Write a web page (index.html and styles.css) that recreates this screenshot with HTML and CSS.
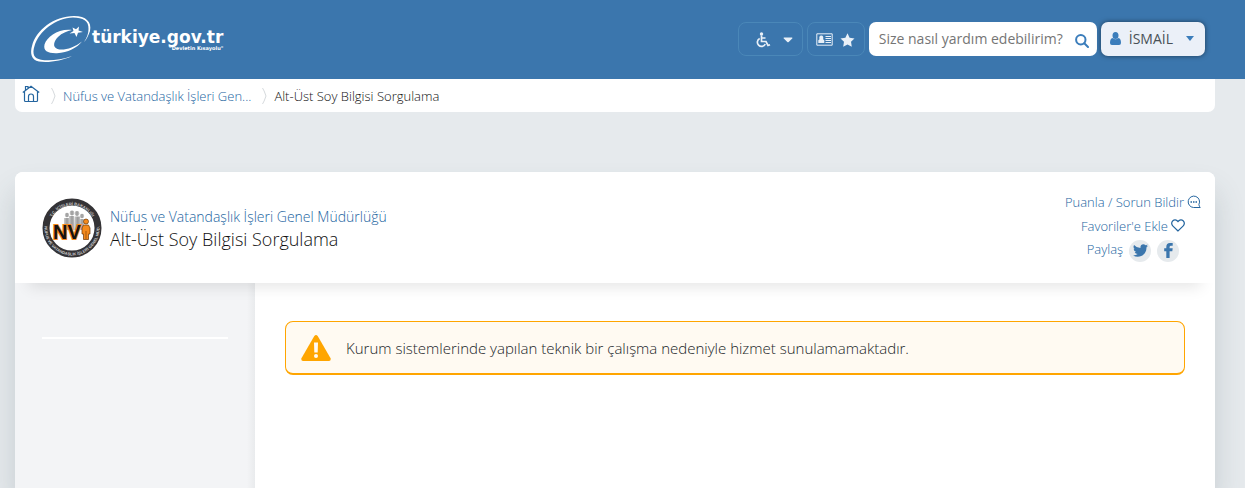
FILE: index.html
```html
<!DOCTYPE html>
<html lang="tr">
<head>
<meta charset="utf-8">
<meta name="viewport" content="width=device-width, initial-scale=1">
<title>Alt-Üst Soy Bilgisi Sorgulama</title>
<link rel="stylesheet" href="styles.css">
</head>
<body>
<header class="topbar">
  <a class="brand" href="#">
    <svg class="brand-mark" viewBox="0 0 62 48" aria-hidden="true">
      <path fill="#fff" d="M42 41C32 46 18 48 9 46.500C1 45 0 38 2 31C6 15 24 1 44 1C56 1 62 7 60 16C58 21 57 24 54 27C57 23 58.500 18 58.500 14C59 6 53 2.500 43 2.500C26 3 9 16 4.500 31C2 39 4 43.500 11 44.700C19 46 31 45 42 41Z"/>
      <path fill="#fff" d="M42 15C28 13.500 17 22 14.500 29.500C13 36 18 38.500 27 38.200C38 37.500 47 33 52 26.500C44 33 33 36 27.500 34C22 32 24 26 28 22C32 18 37 16 42 15Z"/>
      <path fill="#fff" d="M49 11.500L48.500 15.500L53 17L48 17.700L46.500 22L44.500 18L39.500 18.500L43.500 16L42.500 12.500L46 14.200Z"/>
    </svg>
    <span class="brand-text"><span class="brand-name">türkiye.gov.tr</span><span class="brand-motto">"Devletin Kısayolu"</span></span>
  </a>
  <nav class="tools">
    <button class="tool tool-access" type="button" aria-label="Erişilebilirlik">
      <svg width="16" height="16" viewBox="0 0 16 16" fill="none" stroke="currentColor" stroke-width="1.700"><circle cx="6.500" cy="2" r="1.700" fill="currentColor" stroke="none"/><path d="M6.500 3.500V9.500H11L13 13.500L15 12.700M6.500 6H10.500M4.700 6.500A4.200 4.200 0 1 0 10.300 12.200"/></svg>
      <svg width="10" height="6" viewBox="0 0 10 6"><path fill="currentColor" d="M1 .5H9Q10 .8 9.200 1.500L5.700 5Q5 5.500 4.300 5L.8 1.500Q0 .8 1 .5Z"/></svg>
    </button>
    <button class="tool tool-cards" type="button" aria-label="Kısayollar">
      <svg width="17" height="13" viewBox="0 0 17 13"><path fill="none" stroke="currentColor" d="M.8 .8H16.200V12.200H.8Z"/><path fill="currentColor" d="M2.300 10V7.200L3.500 6.200C3 4.500 3.300 2.500 5.300 2.500S7.600 4.500 7.100 6.200L8.300 7.200V10ZM9.500 3H15V4H9.500ZM9.500 5H15V6H9.500ZM9.500 7H15V8H9.500ZM9.500 9H15V10H9.500Z"/></svg>
      <svg width="15" height="14" viewBox="0 0 15 14"><path fill="currentColor" d="M7.500 .3L9.600 4.700L14.500 5.400L11 8.800L11.800 13.700L7.500 11.400L3.200 13.700L4 8.800L.5 5.400L5.400 4.700Z"/></svg>
    </button>
    <form class="search">
      <input type="text" aria-label="Arama" placeholder="Size nasıl yardım edebilirim?">
      <button type="button" aria-label="Ara"><svg width="14" height="14" viewBox="0 0 14 14" fill="none" stroke="currentColor" stroke-width="2"><circle cx="5.800" cy="5.800" r="4.700"/><path d="M9.300 9.300L13 13" stroke-linecap="round"/></svg></button>
    </form>
    <button class="user" type="button">
      <svg width="11" height="13" viewBox="0 0 11 13"><path fill="currentColor" d="M2.500 3.500A3 3.500 0 0 1 8.500 3.500A3 3.500 0 0 1 2.500 3.500M2.500 6Q5.500 8.500 8.500 6Q11 6.500 11 11Q11 13 9 13H2Q0 13 0 11Q0 6.500 2.500 6Z"/></svg>
      <span class="user-name">İSMAİL</span>
      <svg width="8" height="5" viewBox="0 0 8 5"><path fill="currentColor" d="M0 0H8L4 5Z"/></svg>
    </button>
  </nav>
</header>
<nav class="crumbs" aria-label="Sayfa yolu">
  <a class="home" href="#" aria-label="Ana sayfa"><svg width="18" height="18" viewBox="0 0 18 18" fill="none" stroke="currentColor" stroke-width="1.200"><path d="M.8 7.500L9 1.200L17.200 7.500M2.500 6.500V15.500Q2.500 16.500 3.500 16.500H14.500Q15.500 16.500 15.500 15.500V6.500M6.500 16V11.500Q6.500 9 9 9T11.500 11.500V16M3.500 5V1.500H6V3"/></svg></a>
  <svg class="sep" width="5" height="18" viewBox="0 0 5 18"><path fill="none" stroke="#d6dadd" d="M.5 1Q2 3 4 9Q2 15 .5 17"/></svg>
  <a class="crumb-link" href="#">Nüfus ve Vatandaşlık İşleri Gen...</a>
  <svg class="sep" width="5" height="18" viewBox="0 0 5 18"><path fill="none" stroke="#d6dadd" d="M.5 1Q2 3 4 9Q2 15 .5 17"/></svg>
  <span>Alt-Üst Soy Bilgisi Sorgulama</span>
</nav>
<main class="card">
  <div class="card-head">
    <svg class="seal" viewBox="0 0 60 60" role="img" aria-label="NVİ">
      <defs>
        <path id="arc-top" d="M10 41A22.800 22.800 0 1 1 50 41"/>
        <path id="arc-low" d="M4 21A27.500 27.500 0 1 0 56 21"/>
        <linearGradient id="people" x1="0" y1="0" x2="1" y2="0"><stop offset="0" stop-color="#ccc"/><stop offset=".5" stop-color="#999"/><stop offset="1" stop-color="#ccc"/></linearGradient>
      </defs>
      <circle cx="30" cy="30" r="26" fill="#fff" stroke="#343336" stroke-width="7"/>
      <text class="seal-ring" text-anchor="middle"><textPath href="#arc-top" startOffset="50%">T.C. İÇİŞLERİ BAKANLIĞI</textPath></text>
      <text class="seal-ring" text-anchor="middle"><textPath href="#arc-low" startOffset="50%">NÜFUS VE VATANDAŞLIK İŞLERİ GENEL MÜD.</textPath></text>
      <g fill="url(#people)"><circle cx="25" cy="17" r="2.200"/><path d="M22 20H27L28 32H22Z"/><circle cx="30" cy="15" r="2.400"/><path d="M27 18H32L33 32H27Z"/><circle cx="35" cy="15.500" r="2.400"/><path d="M32.500 18.500H38L39 32H32.500Z"/><circle cx="40" cy="18" r="2.200"/><path d="M38 21H42V32H38Z"/></g>
      <text class="seal-name" x="11" y="41">NV</text>
      <path fill="#f58a1d" stroke="#6b3606" stroke-width=".7" d="M41.500 27H46.500L48 30V36H46.500V41.500H41.500V36H40V30Z"/><circle cx="44" cy="23.500" r="2.500" fill="#f58a1d" stroke="#6b3606" stroke-width=".7"/><path stroke="#6b3606" stroke-width=".6" d="M44 33V41"/>
    </svg>
    <h1 class="heading"><a href="#">Nüfus ve Vatandaşlık İşleri Genel Müdürlüğü</a><span>Alt-Üst Soy Bilgisi Sorgulama</span></h1>
    <div class="actions">
      <a href="#">Puanla / Sorun Bildir <svg width="14" height="14" viewBox="0 0 14 14" fill="none" stroke="currentColor"><path d="M13 12.500H6.500A5.700 5.700 0 1 1 11.900 9.500Q12 11.500 13.500 12.500"/><path stroke-width="1.400" stroke-dasharray="1.500 1" d="M3.500 7H10"/></svg></a>
      <a href="#">Favoriler'e Ekle <svg width="14" height="13" viewBox="0 0 14 13" fill="none" stroke="currentColor" stroke-width="1.200"><path d="M7 12L2 7.200C-1.500 3 3.500-1.500 7 2.500C10.500-1.500 15.500 3 12 7.200Z"/></svg></a>
      <div class="share"><span>Paylaş</span>
        <a class="round" href="#" aria-label="Twitter"><svg width="15" height="13" viewBox="0 0 24 20"><path fill="currentColor" d="M24 2.500Q22.500 3.200 21.200 3.300Q22.800 2.200 23.300.5Q21.800 1.400 20.200 1.700C16.500-2 11 1 12 6Q5.500 5.500 1.700 1C0 4 1 6.500 3.200 7.800L1 7.200Q1 11 5 12.200L2.800 12.300Q3.800 15.500 7.400 15.700Q4.500 18 0 17.800C9 23 22 18 21.500 5Q23 4 24 2.500Z"/></svg></a>
        <a class="round" href="#" aria-label="Facebook"><svg width="9" height="15" viewBox="0 0 9 15"><path fill="currentColor" d="M2.300 15V8.300H.2V5.300H2.300V4Q2.300 0 6 0H8.700V2.800H7Q5.600 2.800 5.600 4V5.300H8.700L8.300 8.300H5.600V15Z"/></svg></a>
      </div>
    </div>
  </div>
  <div class="card-body">
    <aside class="side"><hr></aside>
    <section class="content">
      <div class="warning" role="alert">
        <svg width="30" height="26" viewBox="0 0 30 26"><path fill="#ffa500" d="M13.300 1Q15-.8 16.700 1L29.700 23.500Q30 26 28 26H2Q0 26 .3 23.500Z"/><path fill="#fffaf2" d="M13 7.500H17L16.700 17.500H13.300Z"/><circle cx="15" cy="21" r="2" fill="#fffaf2"/></svg>
        <span>Kurum sistemlerinde yapılan teknik bir çalışma nedeniyle hizmet sunulamamaktadır.</span>
      </div>
    </section>
  </div>
</main>
</body>
</html>
```
FILE: styles.css
```css
* { box-sizing: border-box; }
body {
  margin: 0;
  min-height: 100vh;
  display: flex;
  flex-direction: column;
  background: #e6eaed;
  color: #111;
  font: 300 13px/18px "Open Sans", sans-serif;
}
a { color: #24659f; text-decoration: none; }
button { font: inherit; cursor: pointer; }
svg { flex: none; }

.topbar {
  display: flex;
  justify-content: space-between;
  align-items: center;
  min-height: 79px;
  padding: 0 40px 2px 30px;
  background: #3b76ad;
}
.brand { display: flex; align-items: center; color: #fff; }
.brand-mark { width: 62px; height: 48px; }
.brand-text { display: flex; flex-direction: column; padding-top: 3px; }
.brand-name { font: bold 17px/17px "DejaVu Sans", sans-serif; }
.brand-motto { font: bold 5px/5px "DejaVu Sans", sans-serif; text-align: right; }

.tools { display: flex; gap: 4px; }
.tool {
  display: flex;
  align-items: center;
  height: 34px;
  border: 1px solid #4a87b8;
  border-radius: 8px;
  background: transparent;
  color: #e9f0f8;
}
.tool-access { gap: 12px; padding: 2px 9px 0 16px; }
.tool-cards { gap: 7px; padding: 2px 9px 0 8px; }
.search {
  display: flex;
  align-items: center;
  width: 228px;
  height: 34px;
  padding: 0 8px 0 10px;
  border-radius: 7px;
  background: #fff;
}
.search input {
  flex: 1;
  min-width: 0;
  padding: 0;
  border: 0;
  outline: 0;
  background: none;
  font: 14px/20px "Open Sans", sans-serif;
}
.search input::placeholder { color: #757575; }
.search button { display: flex; padding: 4px 0 0; border: 0; background: none; color: #3b7dbb; }
.user {
  display: flex;
  align-items: center;
  gap: 8px;
  height: 34px;
  padding: 0 11px 0 9px;
  border: 0;
  border-radius: 7px;
  background: #ebf0f8;
  color: #3b7dbb;
  box-shadow: 0 0 5px rgba(0, 0, 0, .5);
}
.user-name { margin-right: 5px; color: #495057; font-size: 14px; font-weight: 400; }

.crumbs {
  display: flex;
  align-items: center;
  height: 33px;
  margin: 0 30px 60px 15px;
  padding: 0 7px;
  border-radius: 0 0 7px 7px;
  background: #fff;
}
.home { display: flex; padding-bottom: 4px; }
.sep { margin: 0 7px 0 11px; }
.crumb-link { min-width: 187px; white-space: nowrap; }

.card {
  flex: 1;
  display: flex;
  flex-direction: column;
  margin: 0 30px 0 15px;
  border-radius: 8px 8px 0 0;
  background: #fff;
  box-shadow: 0 20px 30px rgba(60, 80, 90, .2);
}
.card-head {
  position: relative;
  display: flex;
  align-items: center;
  min-height: 111px;
  padding: 0 14px 0 27px;
  border-radius: 8px 8px 0 0;
  background: #fff;
  box-shadow: 0 18px 14px -14px rgba(0, 0, 0, .1);
}
.seal { width: 60px; height: 60px; }
.seal-ring { fill: #ccc; font: bold 4px "Liberation Sans", sans-serif; }
.seal-name {
  fill: #161212;
  stroke: #f58a1d;
  stroke-width: 2px;
  paint-order: stroke;
  font: bold 20px "Liberation Sans", sans-serif;
}
.heading { display: flex; flex-direction: column; margin: 0 auto 0 8px; padding-top: 2px; font-weight: 300; }
.heading a { font-size: 14px; line-height: 20px; }
.heading span { font-size: 18px; line-height: 24px; }
.actions { display: flex; flex-direction: column; align-items: center; gap: 4px; padding-bottom: 2px; }
.actions > a { display: flex; align-items: center; gap: 3px; height: 20px; }
.share { display: flex; gap: 6px; height: 22px; color: #24659f; }
.round {
  display: flex;
  align-items: center;
  justify-content: center;
  width: 22px;
  height: 22px;
  border-radius: 50%;
  background: #e6eaed;
  color: #3b76ad;
}

.card-body { flex: 1; display: flex; }
.side {
  width: 240px;
  padding: 54px 27px 0;
  background: linear-gradient(to left, #e9ebed, #f3f4f6 8px);
}
.side hr { height: 2px; margin: 0; border: 0; background: #fff; }
.content { flex: 1; padding: 38px 30px; }
.warning {
  display: flex;
  align-items: center;
  gap: 15px;
  min-height: 54px;
  padding: 0 15px;
  border: 1px solid #ffa500;
  border-bottom-width: 2px;
  border-radius: 8px;
  background: #fffaf2;
  color: #212529;
  font-size: 15px;
  line-height: 20px;
}
```
